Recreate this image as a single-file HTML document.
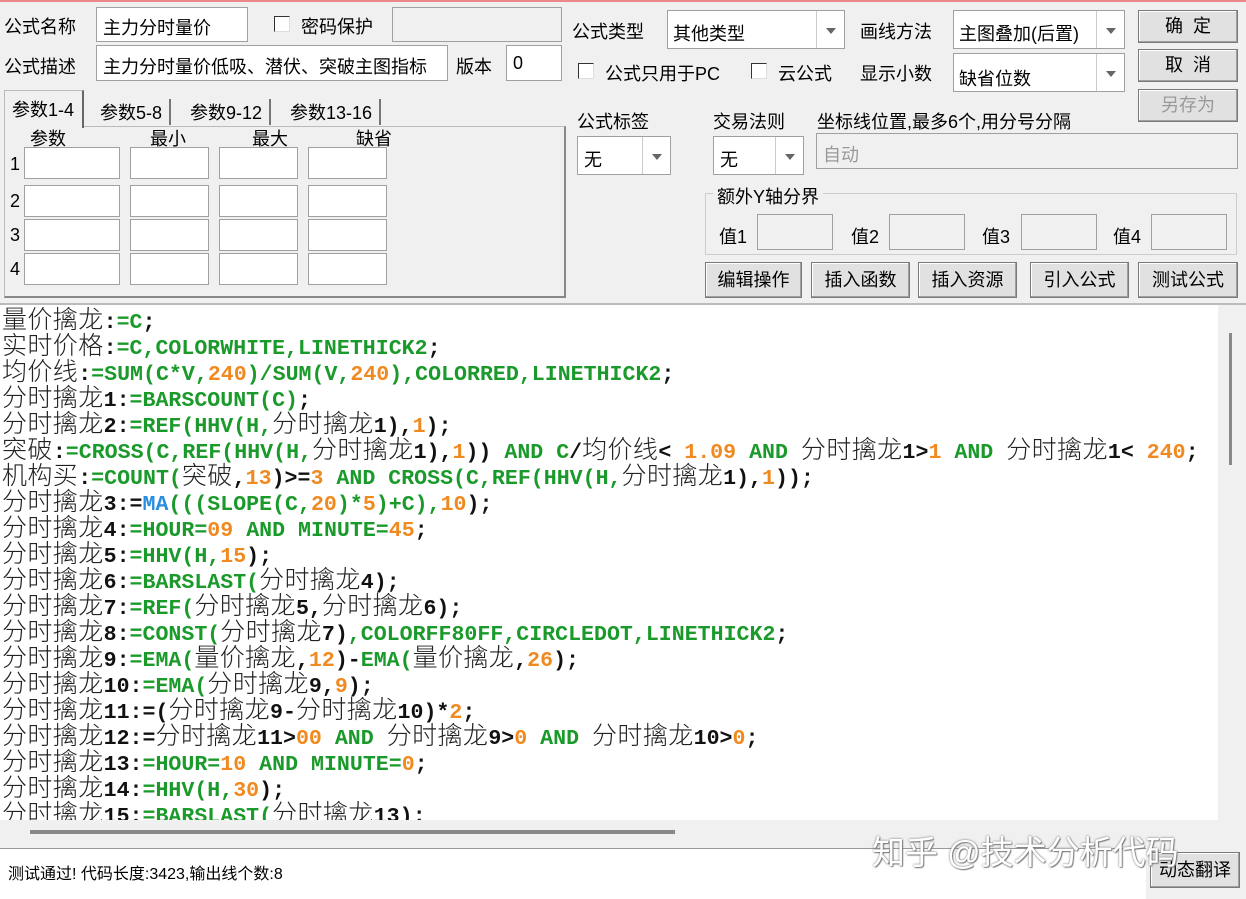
<!DOCTYPE html>
<html><head><meta charset="utf-8"><style>
*{margin:0;padding:0;box-sizing:border-box}
body{width:1246px;height:899px;background:#f0f0f0;position:relative;overflow:hidden;font-family:"Liberation Sans","Noto Sans CJK SC",sans-serif;font-size:18px;color:#000}
.a{position:absolute;white-space:nowrap}
.in{position:absolute;background:#fff;border:1px solid #a0a0a0}
.dis{position:absolute;background:#f0f0f0;border:1px solid #a0a0a0}
.btn{position:absolute;background:#e1e1e1;border:1px solid #7a7a7a;box-shadow:inset -1px -1px 0 #a0a0a0,inset 1px 1px 0 #fff;text-align:center;font-size:18px}
.cb{position:absolute;width:16px;height:16px;background:#fff;border:1px solid #333;border-right-color:#ddd;border-bottom-color:#ddd}
.dd{position:absolute;top:0;right:0;bottom:0;width:28px;border-left:1px solid #ccc}
.dd:after{content:"";position:absolute;left:9px;top:50%;margin-top:-2px;border-left:5px solid transparent;border-right:5px solid transparent;border-top:6px solid #666}
#code{position:absolute;left:0;top:305px;width:1218px;height:515px;background:#fff;overflow:hidden}
.l{position:absolute;left:2px;height:26px;line-height:26px;white-space:nowrap;font-family:"Liberation Mono",monospace;font-weight:bold;font-size:21.6px;color:#111}
.l i{font-style:normal;font-family:"Noto Sans CJK SC",sans-serif;font-weight:300;font-size:25px;letter-spacing:0.4px;color:#222}
.g{color:#1a9a2a}.o{color:#f08a20}.b{color:#2a8ee0}
</style></head><body>
<div class="a" style="left:0;top:0;width:1246px;height:2px;background:#e88"></div>
<div class="a" style="left:4px;top:13px">公式名称</div>
<div class="in" style="left:96px;top:7px;width:152px;height:35px"><span class="a" style="left:6px;top:6px">主力分时量价</span></div>
<div class="cb" style="left:274px;top:16px"></div>
<div class="a" style="left:301px;top:13px">密码保护</div>
<div class="dis" style="left:392px;top:7px;width:170px;height:35px"></div>
<div class="a" style="left:4px;top:53px">公式描述</div>
<div class="in" style="left:96px;top:45px;width:352px;height:36px;overflow:hidden"><span class="a" style="left:6px;top:7px">主力分时量价低吸、潜伏、突破主图指标</span></div>
<div class="a" style="left:456px;top:53px">版本</div>
<div class="in" style="left:506px;top:45px;width:56px;height:36px"><span class="a" style="left:6px;top:7px">0</span></div>
<div class="a" style="left:4px;top:126px;width:562px;height:172px;border:1px solid #bbb;border-right:2px solid #888;border-bottom:2px solid #888"></div>
<div class="a" style="left:4px;top:90px;width:80px;height:38px;background:#f0f0f0;border:1px solid #bbb;border-bottom:none;border-right:2px solid #666"></div>
<div class="a" style="left:12px;top:96px">参数1-4</div>
<div class="a" style="left:100px;top:99px;border-right:2px solid #777;padding-right:7px">参数5-8</div>
<div class="a" style="left:190px;top:99px;border-right:2px solid #777;padding-right:7px">参数9-12</div>
<div class="a" style="left:290px;top:99px;border-right:2px solid #777;padding-right:7px">参数13-16</div>
<div class="a" style="left:30px;top:125px">参数</div>
<div class="a" style="left:150px;top:125px">最小</div>
<div class="a" style="left:252px;top:125px">最大</div>
<div class="a" style="left:356px;top:125px">缺省</div>
<div class="a" style="left:10px;top:154px">1</div><div class="a" style="left:10px;top:191px">2</div><div class="a" style="left:10px;top:225px">3</div><div class="a" style="left:10px;top:259px">4</div>
<div class="in" style="left:24px;top:147px;width:96px;height:32px"></div><div class="in" style="left:130px;top:147px;width:79px;height:32px"></div><div class="in" style="left:219px;top:147px;width:79px;height:32px"></div><div class="in" style="left:308px;top:147px;width:79px;height:32px"></div>
<div class="in" style="left:24px;top:185px;width:96px;height:32px"></div><div class="in" style="left:130px;top:185px;width:79px;height:32px"></div><div class="in" style="left:219px;top:185px;width:79px;height:32px"></div><div class="in" style="left:308px;top:185px;width:79px;height:32px"></div>
<div class="in" style="left:24px;top:219px;width:96px;height:32px"></div><div class="in" style="left:130px;top:219px;width:79px;height:32px"></div><div class="in" style="left:219px;top:219px;width:79px;height:32px"></div><div class="in" style="left:308px;top:219px;width:79px;height:32px"></div>
<div class="in" style="left:24px;top:253px;width:96px;height:32px"></div><div class="in" style="left:130px;top:253px;width:79px;height:32px"></div><div class="in" style="left:219px;top:253px;width:79px;height:32px"></div><div class="in" style="left:308px;top:253px;width:79px;height:32px"></div>
<div class="a" style="left:572px;top:18px">公式类型</div>
<div class="in" style="left:667px;top:10px;width:178px;height:39px"><span class="a" style="left:5px;top:9px">其他类型</span><div class="dd"></div></div>
<div class="a" style="left:860px;top:18px">画线方法</div>
<div class="in" style="left:953px;top:10px;width:172px;height:39px"><span class="a" style="left:5px;top:9px">主图叠加(后置)</span><div class="dd"></div></div>
<div class="btn" style="left:1138px;top:10px;width:100px;height:33px;line-height:31px">确&nbsp;&nbsp;定</div>
<div class="btn" style="left:1138px;top:49px;width:100px;height:33px;line-height:31px">取&nbsp;&nbsp;消</div>
<div class="btn" style="left:1138px;top:89px;width:100px;height:33px;line-height:31px;color:#999">另存为</div>
<div class="cb" style="left:578px;top:63px"></div>
<div class="a" style="left:605px;top:60px">公式只用于PC</div>
<div class="cb" style="left:751px;top:63px"></div>
<div class="a" style="left:778px;top:60px">云公式</div>
<div class="a" style="left:860px;top:60px">显示小数</div>
<div class="in" style="left:953px;top:53px;width:172px;height:39px"><span class="a" style="left:5px;top:11px">缺省位数</span><div class="dd"></div></div>
<div class="a" style="left:577px;top:108px">公式标签</div>
<div class="a" style="left:713px;top:108px">交易法则</div>
<div class="a" style="left:817px;top:108px">坐标线位置,最多6个,用分号分隔</div>
<div class="in" style="left:577px;top:136px;width:94px;height:39px"><span class="a" style="left:6px;top:9px">无</span><div class="dd"></div></div>
<div class="in" style="left:713px;top:136px;width:91px;height:39px"><span class="a" style="left:6px;top:9px">无</span><div class="dd"></div></div>
<div class="dis" style="left:816px;top:133px;width:422px;height:36px"><span class="a" style="left:6px;top:7px;color:#999">自动</span></div>
<div class="a" style="left:705px;top:193px;width:532px;height:62px;border:1px solid #ccc"></div>
<div class="a" style="left:713px;top:183px;background:#f0f0f0;padding:0 4px">额外Y轴分界</div>
<div class="a" style="left:719px;top:223px">值1</div><div class="dis" style="left:757px;top:214px;width:76px;height:36px"></div>
<div class="a" style="left:851px;top:223px">值2</div><div class="dis" style="left:889px;top:214px;width:76px;height:36px"></div>
<div class="a" style="left:982px;top:223px">值3</div><div class="dis" style="left:1021px;top:214px;width:76px;height:36px"></div>
<div class="a" style="left:1113px;top:223px">值4</div><div class="dis" style="left:1151px;top:214px;width:76px;height:36px"></div>
<div class="btn" style="left:705px;top:262px;width:97px;height:36px;line-height:34px">编辑操作</div>
<div class="btn" style="left:811px;top:262px;width:99px;height:36px;line-height:34px">插入函数</div>
<div class="btn" style="left:918px;top:262px;width:99px;height:36px;line-height:34px">插入资源</div>
<div class="btn" style="left:1030px;top:262px;width:99px;height:36px;line-height:34px">引入公式</div>
<div class="btn" style="left:1138px;top:262px;width:100px;height:36px;line-height:34px">测试公式</div>
<div class="a" style="left:0;top:303px;width:1246px;height:2px;background:#bbb"></div>
<div id="code">
<div class="l" style="top:0"><i>量价擒龙</i>:<span class="g">=C</span>;</div>
<div class="l" style="top:26px"><i>实时价格</i>:<span class="g">=C,COLORWHITE,LINETHICK2</span>;</div>
<div class="l" style="top:52px"><i>均价线</i>:<span class="g">=SUM(C*V,</span><span class="o">240</span><span class="g">)/SUM(V,</span><span class="o">240</span><span class="g">),COLORRED,LINETHICK2</span>;</div>
<div class="l" style="top:78px"><i>分时擒龙</i>1:<span class="g">=BARSCOUNT(C)</span>;</div>
<div class="l" style="top:104px"><i>分时擒龙</i>2:<span class="g">=REF(HHV(H,</span><i>分时擒龙</i>1),<span class="o">1</span>);</div>
<div class="l" style="top:130px"><i>突破</i>:<span class="g">=CROSS(C,REF(HHV(H,</span><i>分时擒龙</i>1),<span class="o">1</span>)) <span class="g">AND C</span>/<i>均价线</i>&lt; <span class="o">1.09</span> <span class="g">AND</span> <i>分时擒龙</i>1&gt;<span class="o">1</span> <span class="g">AND</span> <i>分时擒龙</i>1&lt; <span class="o">240</span>;</div>
<div class="l" style="top:156px"><i>机构买</i>:<span class="g">=COUNT(</span><i>突破</i>,<span class="o">13</span>)&gt;=<span class="o">3</span> <span class="g">AND CROSS(C,REF(HHV(H,</span><i>分时擒龙</i>1),<span class="o">1</span>));</div>
<div class="l" style="top:182px"><i>分时擒龙</i>3:=<span class="b">MA</span><span class="g">(((SLOPE(C,</span><span class="o">20</span><span class="g">)*</span><span class="o">5</span><span class="g">)+C),</span><span class="o">10</span>);</div>
<div class="l" style="top:208px"><i>分时擒龙</i>4:<span class="g">=HOUR=</span><span class="o">09</span> <span class="g">AND MINUTE=</span><span class="o">45</span>;</div>
<div class="l" style="top:234px"><i>分时擒龙</i>5:<span class="g">=HHV(H,</span><span class="o">15</span>);</div>
<div class="l" style="top:260px"><i>分时擒龙</i>6:<span class="g">=BARSLAST(</span><i>分时擒龙</i>4);</div>
<div class="l" style="top:286px"><i>分时擒龙</i>7:<span class="g">=REF(</span><i>分时擒龙</i>5,<i>分时擒龙</i>6);</div>
<div class="l" style="top:312px"><i>分时擒龙</i>8:<span class="g">=CONST(</span><i>分时擒龙</i>7)<span class="g">,COLORFF80FF,CIRCLEDOT,LINETHICK2</span>;</div>
<div class="l" style="top:338px"><i>分时擒龙</i>9:<span class="g">=EMA(</span><i>量价擒龙</i>,<span class="o">12</span>)-<span class="g">EMA(</span><i>量价擒龙</i>,<span class="o">26</span>);</div>
<div class="l" style="top:364px"><i>分时擒龙</i>10:<span class="g">=EMA(</span><i>分时擒龙</i>9,<span class="o">9</span>);</div>
<div class="l" style="top:390px"><i>分时擒龙</i>11:=(<i>分时擒龙</i>9-<i>分时擒龙</i>10)*<span class="o">2</span>;</div>
<div class="l" style="top:416px"><i>分时擒龙</i>12:=<i>分时擒龙</i>11&gt;<span class="o">00</span> <span class="g">AND</span> <i>分时擒龙</i>9&gt;<span class="o">0</span> <span class="g">AND</span> <i>分时擒龙</i>10&gt;<span class="o">0</span>;</div>
<div class="l" style="top:442px"><i>分时擒龙</i>13:<span class="g">=HOUR=</span><span class="o">10</span> <span class="g">AND MINUTE=</span><span class="o">0</span>;</div>
<div class="l" style="top:468px"><i>分时擒龙</i>14:<span class="g">=HHV(H,</span><span class="o">30</span>);</div>
<div class="l" style="top:494px"><i>分时擒龙</i>15:<span class="g">=BARSLAST(</span><i>分时擒龙</i>13);</div>
</div>
<div class="a" style="left:1218px;top:305px;width:28px;height:515px;background:#f0f0f0"></div>
<div class="a" style="left:1229px;top:333px;width:3px;height:132px;background:#888"></div>
<div class="a" style="left:0;top:820px;width:1246px;height:28px;background:#f0f0f0"></div>
<div class="a" style="left:30px;top:830px;width:645px;height:4px;background:#888"></div>
<div class="a" style="left:0;top:848px;width:1146px;height:51px;background:#fff;border-top:1px solid #999"></div>
<div class="a" style="left:8px;top:860px;font-size:16px">测试通过! 代码长度:3423,输出线个数:8</div>
<div class="btn" style="left:1150px;top:852px;width:90px;height:36px;line-height:34px">动态翻译</div>
<div class="a" style="left:872px;top:826px;font-size:33px;color:#fff;text-shadow:0 0 2px #666,1px 1px 1px #888">知乎 @技术分析代码</div>
</body></html>
